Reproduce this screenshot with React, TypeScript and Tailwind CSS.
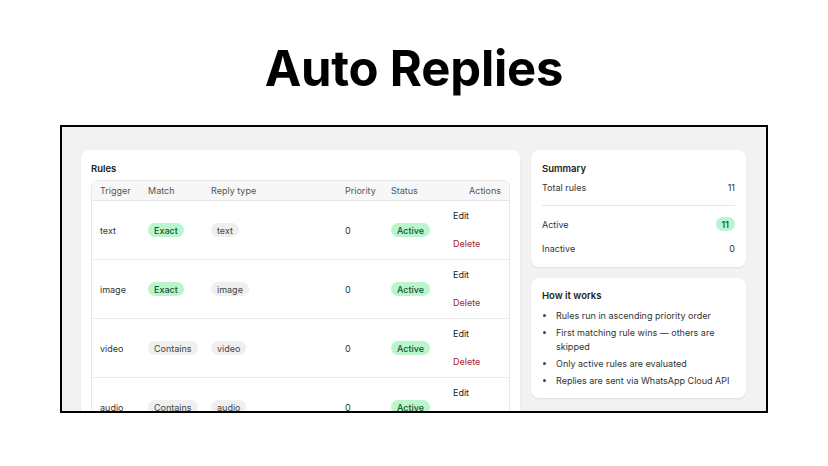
import { ReactNode } from "react";

type Rule = {
  trigger: string;
  match: "Exact" | "Contains";
  replyType: string;
  priority: number;
  active: boolean;
};

const rules: Rule[] = [
  { trigger: "text", match: "Exact", replyType: "text", priority: 0, active: true },
  { trigger: "image", match: "Exact", replyType: "image", priority: 0, active: true },
  { trigger: "video", match: "Contains", replyType: "video", priority: 0, active: true },
  { trigger: "audio", match: "Contains", replyType: "audio", priority: 0, active: true },
];

function Pill({ tone = "gray", children }: { tone?: "gray" | "green"; children: ReactNode }) {
  return (
    <span
      className={
        tone === "green"
          ? "inline-flex items-center rounded-full bg-[#b9f5cd] px-[6px] h-[14px] text-[9px] font-medium text-[#14532d]"
          : "inline-flex items-center rounded-full bg-[#efefef] px-[6px] h-[14px] text-[9px] text-[#444]"
      }
    >
      {children}
    </span>
  );
}

function Card({ className = "", children }: { className?: string; children: ReactNode }) {
  return (
    <div className={`rounded-[8px] bg-white shadow-[0_1px_2px_rgba(0,0,0,0.08)] ${className}`}>{children}</div>
  );
}

function RulesTable() {
  return (
    <div className="rounded-t-[6px] border border-[#e8e8e8]">
      <div className="grid grid-cols-[48px_63px_134px_46px_61px_1fr] h-[20px] items-center bg-[#f7f7f7] border-b border-[#e6e6e6] px-[8px] text-[9px] text-[#555]">
        <span>Trigger</span>
        <span>Match</span>
        <span>Reply type</span>
        <span>Priority</span>
        <span>Status</span>
        <span className="text-right">Actions</span>
      </div>
      {rules.map((r) => (
        <div
          key={r.trigger}
          className="grid grid-cols-[48px_63px_134px_46px_61px_1fr] h-[59px] items-center border-b border-[#ececec] px-[8px] text-[9px] text-[#333]"
        >
          <span>{r.trigger}</span>
          <span>
            <Pill tone={r.match === "Exact" ? "green" : "gray"}>{r.match}</Pill>
          </span>
          <span>
            <Pill>{r.replyType}</Pill>
          </span>
          <span>{r.priority}</span>
          <span>
            <Pill tone="green">{r.active ? "Active" : "Inactive"}</Pill>
          </span>
          <div className="flex flex-col gap-[14px] leading-[14px] pl-[1px]">
            <span className="text-[#222]">Edit</span>
            <span className="text-[#a3262a]">Delete</span>
          </div>
        </div>
      ))}
    </div>
  );
}

export default function App() {
  return (
    <div
      className="w-[828px] h-[466px] bg-white"
      style={{ fontFamily: "Inter, 'Noto Sans', sans-serif" }}
    >
      <h1 className="h-[125px] pt-[39px] text-center text-[49px] leading-[60px] font-bold text-black tracking-[-0.2px]">
        Auto Replies
      </h1>
      <div className="ml-[60px] w-[708px] h-[288px] border-2 border-black bg-[#f2f2f2] overflow-hidden">
        <div className="flex gap-[11px] pl-[19px] pt-[23px]">
          <Card className="w-[439px] h-[300px] px-[10px] pt-[12px]">
            <div className="text-[9.5px] font-semibold text-[#222] mb-[4px]">Rules</div>
            <RulesTable />
          </Card>
          <div className="flex flex-col gap-[11px] w-[215px]">
            <Card className="px-[11px] pt-[12px] pb-[11px] text-[9px] text-[#333]">
              <div className="text-[9.5px] font-semibold text-[#222] mb-[5px]">Summary</div>
              <div className="flex justify-between leading-[14px]">
                <span>Total rules</span>
                <span>11</span>
              </div>
              <div className="border-t border-[#e6e6e6] my-[10px]" />
              <div className="flex justify-between items-center h-[16px]">
                <span>Active</span>
                <Pill tone="green">11</Pill>
              </div>
              <div className="flex justify-between mt-[10px] leading-[14px]">
                <span>Inactive</span>
                <span>0</span>
              </div>
            </Card>
            <Card className="px-[11px] pt-[11px] pb-[10px] text-[9px] text-[#333]">
              <div className="text-[9.5px] font-semibold text-[#222] mb-[5px]">How it works</div>
              <ul className="list-disc pl-[14px] flex flex-col gap-[3px] leading-[14px] marker:text-[#444]">
                <li>Rules run in ascending priority order</li>
                <li>First matching rule wins — others are skipped</li>
                <li>Only active rules are evaluated</li>
                <li>Replies are sent via WhatsApp Cloud API</li>
              </ul>
            </Card>
          </div>
        </div>
      </div>
    </div>
  );
}
